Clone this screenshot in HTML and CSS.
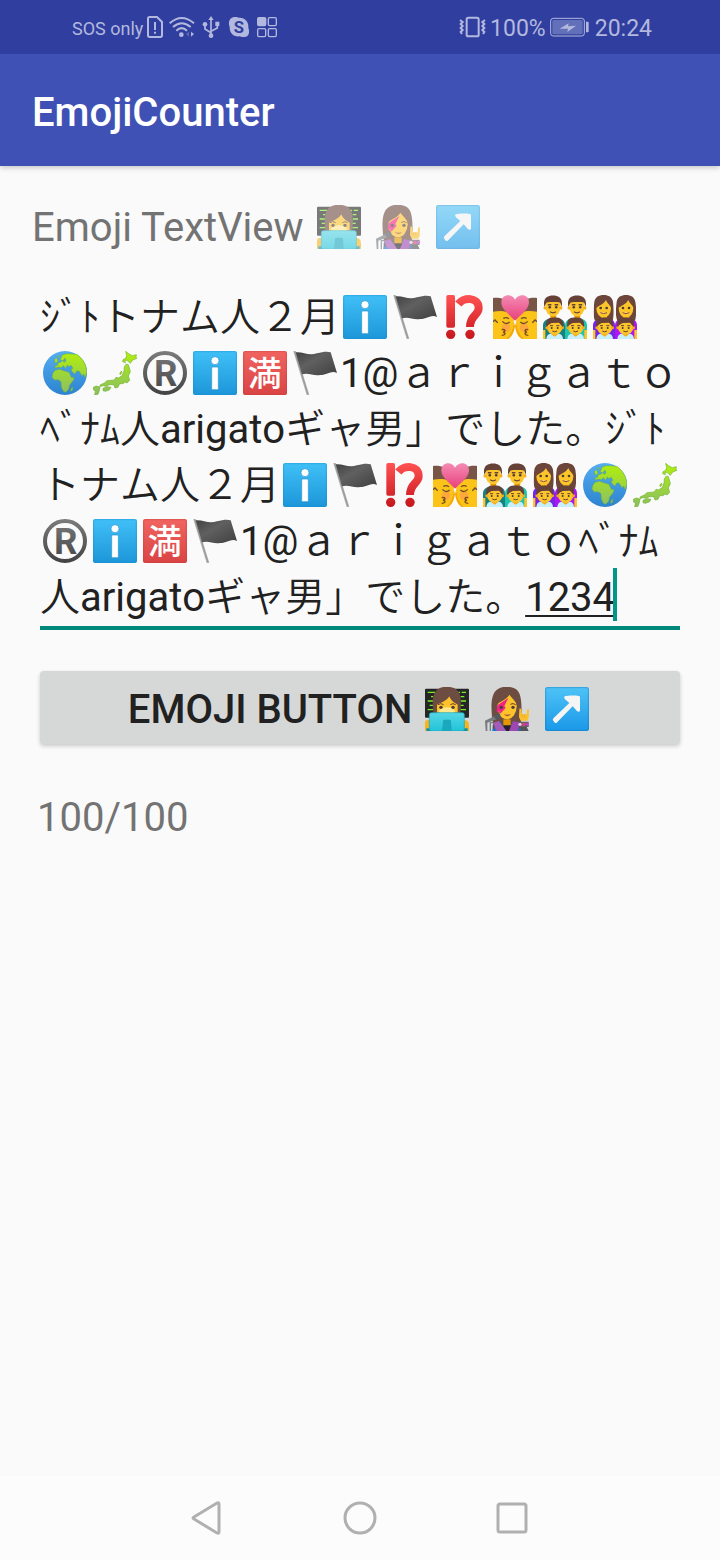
FILE: index.html
```html
<!DOCTYPE html>
<html lang="ja">
<head>
<meta charset="utf-8">
<meta name="viewport" content="width=device-width, initial-scale=1">
<title>EmojiCounter</title>
<link rel="stylesheet" href="styles.css">
</head>
<body>
<svg class="defs" aria-hidden="true">
  <defs>
    <linearGradient id="blue" x1="0" y1="0" x2="0" y2="1"><stop offset="0" stop-color="#40c0f7"/><stop offset="1" stop-color="#1d96d9"/></linearGradient>
    <linearGradient id="sky" x1="0" y1="0" x2="0" y2="1"><stop offset="0" stop-color="#4fc3f7"/><stop offset="1" stop-color="#1a98e8"/></linearGradient>
    <linearGradient id="red" x1="0" y1="0" x2="0" y2="1"><stop offset="0" stop-color="#f06460"/><stop offset="1" stop-color="#d94444"/></linearGradient>
    <linearGradient id="mark" gradientUnits="userSpaceOnUse" x1="0" y1="0" x2="0" y2="132"><stop offset="0" stop-color="#ff5252"/><stop offset="1" stop-color="#c6161d"/></linearGradient>
    <linearGradient id="flagFill" x1="0" y1="0" x2="1" y2="1"><stop offset="0" stop-color="#414141"/><stop offset=".4" stop-color="#606060"/><stop offset="1" stop-color="#404040"/></linearGradient>
    <linearGradient id="grey" gradientUnits="userSpaceOnUse" x1="0" y1="0" x2="0" y2="132"><stop offset="0" stop-color="#7c7c7c"/><stop offset="1" stop-color="#424242"/></linearGradient>
    <linearGradient id="sea" x1="0" y1="0" x2="0" y2="1"><stop offset="0" stop-color="#55adf2"/><stop offset="1" stop-color="#2c83d0"/></linearGradient>
    <linearGradient id="land" gradientUnits="userSpaceOnUse" x1="0" y1="0" x2="0" y2="132"><stop offset="0" stop-color="#b2f00a"/><stop offset="1" stop-color="#8abd66"/></linearGradient>
    <linearGradient id="heart" x1="0" y1="0" x2="0" y2="1"><stop offset="0" stop-color="#f48bb4"/><stop offset="1" stop-color="#e8407a"/></linearGradient>
    <linearGradient id="laptop" x1="0" y1="0" x2="0" y2="1"><stop offset="0" stop-color="#55d6e5"/><stop offset="1" stop-color="#22c3da"/></linearGradient>

    <symbol id="info" viewBox="0 0 132 132">
      <rect width="132" height="132" rx="6" fill="url(#blue)"/><rect x="2" y="2" width="128" height="128" rx="5" fill="none" stroke="#178bcb" stroke-opacity=".4" stroke-width="3"/>
      <circle cx="66" cy="29" r="12" fill="#fff" stroke="#2496d0" stroke-width="2"/><rect x="56" y="48" width="20" height="68" rx="3" fill="#fff" stroke="#2496d0" stroke-width="2"/>
    </symbol>
    <symbol id="flag" viewBox="0 0 132 132">
      <path d="M1 1 8 0 49 131 41 132Z" fill="#b0b0b0"/><path d="M5 1 45 131" stroke="#8a8a8a" stroke-width="2"/>
      <path d="M8 4C32 2 45 15 72 7C90 2 104 1 113 4L132 66C115 56 104 72 82 72C60 76 48 64 27 70Z" fill="url(#flagFill)"/>
    </symbol>
    <symbol id="interrobang" viewBox="0 0 132 132">
      <rect x="10" y="0" width="26" height="98" rx="5" fill="url(#mark)"/><circle cx="23" cy="118" r="14" fill="url(#mark)"/><circle cx="81" cy="118" r="14" fill="url(#mark)"/>
      <path d="M46 27C62 6 107 5 107 39C107 62 81 60 81 96" fill="none" stroke="url(#mark)" stroke-width="24" stroke-linejoin="round"/>
    </symbol>
    <symbol id="kiss" viewBox="0 0 132 132">
      <g id="kissHalf">
        <path d="M0 42H48C58 51 64 65 62 82C60 103 53 123 38 132H0Z" fill="#fcc419"/>
        <path d="M38 132C51 123 61 101 62 78L66 94C63 113 56 126 46 132Z" fill="#f6a900"/>
        <path d="M0 9C21 7 44 12 55 31L59 63C49 50 31 44 0 50Z" fill="#795548"/>
        <circle cx="39" cy="98" r="13" fill="#ff9056" opacity=".55"/>
        <path d="M0 80 6 75 14 83M28 79Q39 91 50 81M31 70Q40 65 48 71" fill="none" stroke="#6d4b33" stroke-width="4"/>
        <path d="M26 104C38 102 39 110 30 112C40 114 37 121 26 121" fill="none" stroke="#794b20" stroke-width="4"/>
      </g>
      <use href="#kissHalf" transform="translate(132 0) scale(-1 1)"/>
      <path d="M66 77C47 57 25 43 25 22C25-5 59-5 66 14C75-5 108-5 108 22C108 43 83 60 66 77Z" fill="url(#heart)"/>
    </symbol>
    <symbol id="child" viewBox="0 0 60 66">
      <path d="M5 66C6 51 15 48 30 48S54 51 55 66Z" fill="#c6eefb"/><path d="M20 44H40V51L30 58 20 51Z" fill="#f2aa13"/>
      <ellipse cx="30" cy="31" rx="23" ry="21" fill="#fcc62b"/><circle cx="7" cy="31" r="5" fill="#f1ae20"/><circle cx="53" cy="31" r="5" fill="#f1ae20"/>
      <path d="M5 29C2 9 10 0 30 0S58 10 55 29L48 22 43 16 21 17 12 22Z" fill="#664137"/>
      <circle cx="21" cy="32" r="3" fill="#493d35"/><circle cx="39" cy="32" r="3" fill="#493d35"/><path d="M16 25H25M35 25H44M23 41Q30 46 37 41" stroke="#654039" stroke-width="3" fill="none"/>
    </symbol>
    <symbol id="man" viewBox="0 0 60 70">
      <path d="M22 54H40V70H22Z" fill="#e59600"/><ellipse cx="30" cy="34" rx="24" ry="31" fill="#fcc62b"/><circle cx="5" cy="39" r="5" fill="#f1ae20"/><circle cx="55" cy="39" r="5" fill="#f1ae20"/>
      <path d="M3 35C-2 8 12 0 30 0S62 9 57 35L52 22C39 20 23 20 10 22Z" fill="#664137"/>
      <circle cx="20" cy="37" r="4" fill="#493d35"/><circle cx="40" cy="37" r="4" fill="#493d35"/><path d="M14 29H25M35 29H46M21 51Q30 57 39 51" stroke="#654039" stroke-width="4" fill="none"/>
    </symbol>
    <symbol id="woman" viewBox="0 0 60 80">
      <path d="M4 77C-3 60 0 39 2 20C5 6 15 0 30 0S55 6 58 20C61 39 62 61 57 77Z" fill="#6d453b"/><path d="M22 55H40V80H22Z" fill="#e59600"/><ellipse cx="30" cy="40" rx="22" ry="28" fill="#fcc62b"/>
      <path d="M7 41C12 32 30 29 37 15C42 28 52 32 54 41L53 12 31 5 9 13Z" fill="#6d453b"/><circle cx="21" cy="39" r="4" fill="#493d35"/><circle cx="39" cy="39" r="4" fill="#493d35"/><path d="M20 53Q30 59 40 53" fill="#fff" stroke="#8c4634" stroke-width="3"/>
    </symbol>
    <symbol id="dads" viewBox="0 0 132 132">
      <path d="M0 132V91C0 74 16 70 32 68C50 68 66 74 66 91V132Z" fill="#158182"/><path d="M66 132V91C66 73 85 68 101 68C121 70 132 76 132 92V132Z" fill="#20c4ae"/><path d="M0 105H7V132H0ZM124 105H132V132H124Z" fill="#ffc529"/>
      <use href="#man" x="1" y="0" width="58" height="70"/><use href="#man" x="73" y="0" width="58" height="70"/>
      <use href="#child" x="5" y="67" width="60" height="66"/><use href="#child" x="68" y="67" width="60" height="66"/>
    </symbol>
    <symbol id="moms" viewBox="0 0 132 132">
      <path d="M0 132V91C0 74 16 70 32 68C50 68 66 74 66 91V132Z" fill="#7624e7"/><path d="M66 132V91C66 73 85 68 101 68C121 70 132 76 132 92V132Z" fill="#ad15f3"/><path d="M0 105H7V132H0ZM124 105H132V132H124Z" fill="#ffc529"/>
      <use href="#woman" x="2" y="0" width="60" height="80"/><use href="#woman" x="69" y="0" width="60" height="80"/>
      <use href="#child" x="5" y="67" width="60" height="66"/><use href="#child" x="68" y="67" width="60" height="66"/>
    </symbol>
    <symbol id="globe" viewBox="0 0 132 132">
      <circle cx="66" cy="66" r="66" fill="url(#sea)"/>
      <g fill="url(#land)" stroke="#66a83e" stroke-width="1.5"><path d="M58 12C70 5 91 10 101 10C119 22 131 42 132 64L126 80 122 69 117 74 108 60 101 60 96 69 88 63 84 54 90 52 84 43 78 47 73 42 68 52 61 44 55 50 47 48 37 51 36 44 44 43 45 36 53 34 59 28 63 34 69 30 66 21 58 31 52 25Z"/>
      <path d="M36 58 50 55 64 60 78 64 85 79 94 80 90 90 80 102 77 115 68 124 61 121 55 109 54 92 45 86 34 87 27 78 29 68Z"/><path d="M35 25 41 20 45 32 36 36ZM85 111 90 107 88 119 82 121ZM42 16 47 13 48 18Z"/></g>
    </symbol>
    <symbol id="japan" viewBox="0 0 132 132">
      <g fill="url(#land)" stroke="#73b52d" stroke-width="2" stroke-linejoin="round"><path d="M98 1 108 9 118 14 130 11 129 19 132 22 119 27 112 37 102 28 96 28 97 35 89 32 90 26 98 22 101 14Z"/>
      <path d="M100 39 106 41 110 54 112 62 106 75 110 88 102 96 96 93 90 98 80 98 75 109 66 111 62 101 49 101 40 106 29 104 22 107 21 102 34 96 42 89 64 87 69 79 77 81 88 73 93 60 94 47Z"/><path d="M80 68 85 60 87 65 82 71ZM30 112 42 107 54 109 49 117 37 121 30 119ZM1 109 10 105 21 108 19 119 15 130 5 132 7 121 0 115Z"/></g>
    </symbol>
    <symbol id="registered" viewBox="0 0 132 132">
      <circle cx="66" cy="66" r="60" fill="none" stroke="url(#grey)" stroke-width="12"/><text class="mark-letter" x="68" y="105" text-anchor="middle" fill="url(#grey)">R</text>
    </symbol>
    <symbol id="full" viewBox="0 0 132 132">
      <rect width="132" height="132" rx="6" fill="url(#red)"/><rect x="2" y="2" width="128" height="128" rx="5" fill="none" stroke="#c73d3b" stroke-opacity=".4" stroke-width="3"/><text class="mark-kanji" x="65" y="105" text-anchor="middle" fill="#fff">満</text>
    </symbol>
    <symbol id="arrow" viewBox="0 0 132 132">
      <rect width="132" height="132" rx="6" fill="url(#sky)"/><rect x="2" y="2" width="128" height="128" rx="5" fill="none" stroke="#1378b8" stroke-opacity=".45" stroke-width="3"/>
      <path d="M59 28C70 25 90 25 101 27Q105 27 105 31V71C102 77 96 73 90 65L83 58 35 107Q31 109 28 106L24 100Q22 97 26 93L73 48 60 37Q55 31 59 28Z" fill="#f5f5f5"/>
    </symbol>
    <symbol id="coder" viewBox="0 0 132 132">
      <rect x="0" y="5" width="132" height="87" rx="3" fill="#252525"/>
      <path d="M8 16H30M18 29H25M8 42H28M14 55H27M8 68H25M100 16H105M110 16H123M107 29H118M108 42H123M104 55H116M106 68H123" stroke="#75f321" stroke-width="4"/>
      <path d="M25 79C21 42 23 17 38 7C56-5 84-2 96 9C111 24 108 51 106 79Z" fill="#6d4c41"/>
      <path d="M36 53C50 46 65 42 73 28C78 42 90 49 98 53V77H36Z" fill="#fcc32c"/><ellipse cx="66" cy="73" rx="24" ry="12" fill="#ffe78d"/>
      <circle cx="48" cy="61" r="5" fill="#493d35"/><circle cx="84" cy="61" r="5" fill="#493d35"/><path d="M39 53Q47 47 56 53M76 53Q84 47 92 53" stroke="#674036" stroke-width="3" fill="none"/>
      <path d="M0 132V107C2 98 10 96 15 102V125H5V132ZM117 101C126 96 132 105 132 115V132H127V126H117Z" fill="#f6b51b"/><path d="M4 132V124H128V132Z" fill="#158f9e"/>
      <rect x="13" y="77" width="105" height="55" rx="6" fill="url(#laptop)" stroke="#16a8bb" stroke-width="2"/><path d="M51 132 54 102Q54 98 59 98H74Q78 98 78 103L80 132Z" fill="#19a8bc"/>
    </symbol>
    <symbol id="singer" viewBox="0 0 132 132">
      <path d="M24 110C18 74 16 30 31 13C46-6 84-4 98 11C113 27 110 78 108 112Z" fill="#6d4c41"/>
      <path d="M23 132V113C39 101 54 103 66 103C91 103 109 106 121 111L131 132Z" fill="#535259"/><path d="M55 97H77V119H55Z" fill="#e59600"/><path d="M54 115H79L73 132H60Z" fill="#251f2c"/>
      <ellipse cx="66" cy="58" rx="29" ry="39" fill="#fcc32c"/><path d="M33 55C44 43 65 38 73 23C82 35 92 42 98 56L95 25 73 10 46 18Z" fill="#6d4c41"/>
      <path d="M70 33 58 57 62 62 49 77 43 81 43 73 35 75 37 55Z" fill="#f02386"/><circle cx="49" cy="61" r="5" fill="#4b3d35"/><circle cx="84" cy="61" r="5" fill="#4b3d35"/><path d="M76 52Q84 47 92 53" stroke="#674036" stroke-width="3" fill="none"/><path d="M56 81Q66 86 78 81Q67 94 56 81Z" fill="#ab5028"/>
      <path d="M25 107 42 102 64 132H33Z" fill="#a45cb8"/><path d="M84 102 106 107 98 132H72Z" fill="#9d48b2"/><path d="M24 122 37 132H22ZM98 127 107 123 106 132Z" fill="#1976d2"/>
      <path d="M0 101 31 86 38 91 37 96 7 107V132H2ZM14 105H26V109H18V132H14Z" fill="#777c80"/><path d="M28 88C33 78 47 76 46 87C45 96 35 101 29 94Z" fill="#535960"/>
      <path d="M103 68C103 61 108 63 109 69L111 82H125L126 70Q130 63 132 69L131 92 127 101H107L102 90Z" fill="#fbc02d"/><path d="M112 82V91M119 82V91" stroke="#e7a020" stroke-width="2"/>
      <path d="M104 104H131V120H106Z" fill="#626262"/><circle cx="105" cy="112" r="5" fill="#e8c9ed"/><circle cx="117" cy="112" r="5" fill="#ef3983"/><circle cx="128" cy="112" r="4" fill="#d630f2"/>
    </symbol>
  </defs>
</svg>

<header>
  <div class="status-bar">
    <div class="status-group notices">
      <span class="carrier">SOS only</span>
      <svg width="16" height="22" viewBox="0 0 48 66" fill="none" stroke="currentColor" stroke-width="6" aria-hidden="true"><path d="M8 3H30L45 18V58Q45 63 40 63H8Q3 63 3 58V8Q3 3 8 3ZM24 18V42M24 47V53"/></svg>
      <svg width="26" height="22" viewBox="0 0 78 66" fill="none" stroke="currentColor" stroke-width="6" aria-hidden="true"><path d="M2 22Q38-10 75 22M12 33Q38 10 65 33M22 44Q38 29 54 44"/><circle cx="37" cy="56" r="7" fill="currentColor" stroke="none"/><path d="M66 47 75 54 66 62Z" fill="currentColor" stroke="none"/><path d="M60 47 51 54 60 62Z" fill="currentColor" stroke="none" opacity=".35"/></svg>
      <svg width="20" height="22" viewBox="0 0 60 66" fill="none" stroke="currentColor" stroke-width="5" aria-hidden="true"><path d="M30 6V58M30 50 12 39V25M30 46 49 36V25"/><path d="M30 0 38 12H22ZM43 17H55V30H43Z" fill="currentColor" stroke="none"/><circle cx="12" cy="25" r="7" fill="currentColor" stroke="none"/><circle cx="30" cy="59" r="7" fill="currentColor" stroke="none"/></svg>
      <svg width="24" height="22" viewBox="0 0 72 66" aria-hidden="true"><path d="M21 3C28 2 32 4 36 5C54 4 66 19 64 35C69 48 66 63 52 63C45 64 42 62 38 61C19 63 7 50 8 32C3 20 7 5 21 3Z" fill="currentColor"/><text class="badge-letter" x="36" y="51" text-anchor="middle">S</text></svg>
      <svg width="20" height="22" viewBox="0 0 60 66" fill="none" stroke="currentColor" stroke-width="4" aria-hidden="true"><rect x="2" y="5" width="24" height="24" rx="4" fill="currentColor"/><rect x="34" y="5" width="24" height="24" rx="4"/><rect x="2" y="38" width="24" height="24" rx="4"/><rect x="34" y="38" width="24" height="24" rx="4"/></svg>
    </div>
    <div class="status-group">
      <svg width="27" height="22" viewBox="0 0 81 66" fill="none" stroke="currentColor" stroke-width="6" aria-hidden="true"><rect x="23" y="5" width="36" height="56" rx="5"/><path d="M3 12 11 18 5 24 11 30 5 36 11 42 5 48 9 54M78 12 70 18 76 24 70 30 76 36 70 42 76 48 72 54"/></svg>
      <span class="percent">100%</span>
      <svg width="39" height="22" viewBox="0 0 117 66" aria-hidden="true"><rect x="2" y="7" width="101" height="53" rx="8" fill="none" stroke="currentColor" stroke-width="3"/><rect x="7" y="12" width="91" height="43" rx="4" fill="#626fb9"/><path d="M29 38 56 22 54 31 78 29 52 48 54 38Z" fill="currentColor"/><path d="M108 17H113Q116 17 116 20V46Q116 49 113 49H108Z" fill="currentColor"/></svg>
      <span class="clock">20:24</span>
    </div>
  </div>
  <div class="app-bar"><h1>EmojiCounter</h1></div>
</header>

<main>
  <p class="text-view" id="field-label">Emoji TextView <svg class="emoji"><use href="#coder"/></svg> <svg class="emoji"><use href="#singer"/></svg> <svg class="emoji"><use href="#arrow"/></svg></p>
  <div class="edit-text" role="textbox" aria-multiline="true" aria-labelledby="field-label" contenteditable="true" spellcheck="false">ｼﾞﾄトナム人２月<svg class="emoji"><use href="#info"/></svg><svg class="emoji"><use href="#flag"/></svg><svg class="emoji"><use href="#interrobang"/></svg><svg class="emoji"><use href="#kiss"/></svg><svg class="emoji"><use href="#dads"/></svg><svg class="emoji"><use href="#moms"/></svg><svg class="emoji"><use href="#globe"/></svg><svg class="emoji"><use href="#japan"/></svg><svg class="emoji"><use href="#registered"/></svg><svg class="emoji"><use href="#info"/></svg><svg class="emoji"><use href="#full"/></svg><svg class="emoji"><use href="#flag"/></svg>1@ａｒｉｇａｔｏﾍﾞﾅﾑ人arigatoギャ男」でした。ｼﾞﾄトナム人２月<svg class="emoji"><use href="#info"/></svg><svg class="emoji"><use href="#flag"/></svg><svg class="emoji"><use href="#interrobang"/></svg><svg class="emoji"><use href="#kiss"/></svg><svg class="emoji"><use href="#dads"/></svg><svg class="emoji"><use href="#moms"/></svg><svg class="emoji"><use href="#globe"/></svg><svg class="emoji"><use href="#japan"/></svg><svg class="emoji"><use href="#registered"/></svg><svg class="emoji"><use href="#info"/></svg><svg class="emoji"><use href="#full"/></svg><svg class="emoji"><use href="#flag"/></svg>1@ａｒｉｇａｔｏﾍﾞﾅﾑ人arigatoギャ男」でした。<span class="composing">1234</span></div>
  <button class="emoji-button" type="button">EMOJI BUTTON <svg class="emoji"><use href="#coder"/></svg> <svg class="emoji"><use href="#singer"/></svg> <svg class="emoji"><use href="#arrow"/></svg></button>
  <p class="counter">100/100</p>
</main>

<nav class="nav-bar" aria-label="System navigation">
  <button type="button" aria-label="Back"><svg width="34" height="34" viewBox="0 0 34 34"><path d="M28 3V31Q28 33 26 32L3 18Q1 17 3 16L26 2Q28 1 28 3Z"/></svg></button>
  <button type="button" aria-label="Home"><svg width="34" height="34" viewBox="0 0 34 34"><circle cx="17" cy="17" r="15"/></svg></button>
  <button type="button" aria-label="Recent apps"><svg width="34" height="34" viewBox="0 0 34 34"><rect x="3" y="3" width="28" height="28" rx="2"/></svg></button>
</nav>
</body>
</html>
```

FILE: styles.css
```css
* { box-sizing: border-box; }

body {
  margin: 0;
  min-height: 100vh;
  display: flex;
  flex-direction: column;
  background: #fafafa;
  color: #212121;
  font-family: Roboto, "Noto Sans CJK JP", sans-serif;
  font-size: 40px;
}

.defs { position: absolute; width: 0; height: 0; }

h1, p { margin: 0; }

header { box-shadow: 0 1px 6px rgba(0, 0, 0, 0.25); }

.status-bar {
  display: flex;
  justify-content: space-between;
  align-items: center;
  height: 54px;
  padding: 2px 68px 0 72px;
  background: #303f9f;
  color: #b3b8de;
}

.status-group { display: flex; align-items: center; gap: 4px; }
.notices { gap: 6px; }
.carrier { font-size: 18px; margin-right: -2px; }
.status-group svg { margin-bottom: 2px; }
.percent { font-size: 23px; }
.clock { font-size: 23px; margin-left: 2px; }

.badge-letter {
  font-family: Roboto, sans-serif;
  font-size: 50px;
  font-weight: 700;
  fill: #303f9f;
}

.app-bar {
  display: flex;
  align-items: center;
  height: 112px;
  padding: 4px 32px 0;
  background: #3f51b5;
}

h1 {
  color: #fff;
  font-size: 40px;
  font-weight: 500;
}

main {
  flex: 1;
  padding: 34px 32px 32px;
}

.emoji {
  width: 44px;
  height: 44px;
  margin: 0 3px;
  vertical-align: -8px;
}

.mark-letter {
  font-family: Roboto, sans-serif;
  font-size: 110px;
  font-weight: 700;
}

.mark-kanji {
  font-family: "Noto Sans CJK JP", sans-serif;
  font-size: 102px;
  font-weight: 500;
}

.text-view {
  color: #737373;
  line-height: 56px;
}

.text-view .emoji { opacity: 0.6; }

.edit-text {
  margin: 34px 8px 0;
  border-bottom: 4px solid #00897b;
  outline: none;
  font-family: Roboto, "Noto Sans CJK JP DemiLight", "Noto Sans CJK JP", sans-serif;
  font-kerning: none;
  line-height: 56px;
  line-break: anywhere;
}

.composing {
  position: relative;
  text-decoration: underline;
  text-decoration-thickness: 2px;
  text-underline-offset: 4px;
  text-decoration-skip-ink: none;
}

.composing::after {
  content: "";
  position: absolute;
  right: -2px;
  bottom: 0;
  width: 4px;
  height: 53px;
  background: #009688;
}

.emoji-button {
  display: block;
  width: calc(100% - 16px);
  min-height: 73px;
  margin: 41px 8px 0;
  padding: 4px 0 0;
  border: 0;
  border-radius: 4px;
  background: #d6d7d7;
  box-shadow: 0 2px 4px rgba(0, 0, 0, 0.2);
  color: #212121;
  font: inherit;
  font-weight: 500;
  line-height: 56px;
}

.counter {
  margin: 46px 5px 0;
  color: #737373;
  line-height: 56px;
}

.nav-bar {
  display: flex;
  justify-content: center;
  gap: 108px;
  padding: 20px 0;
  background: #fcfcfc;
}

.nav-bar button {
  display: grid;
  place-items: center;
  width: 44px;
  height: 44px;
  padding: 0;
  border: 0;
  background: none;
}

.nav-bar svg {
  fill: none;
  stroke: #b0b0b0;
  stroke-width: 3px;
}
```
